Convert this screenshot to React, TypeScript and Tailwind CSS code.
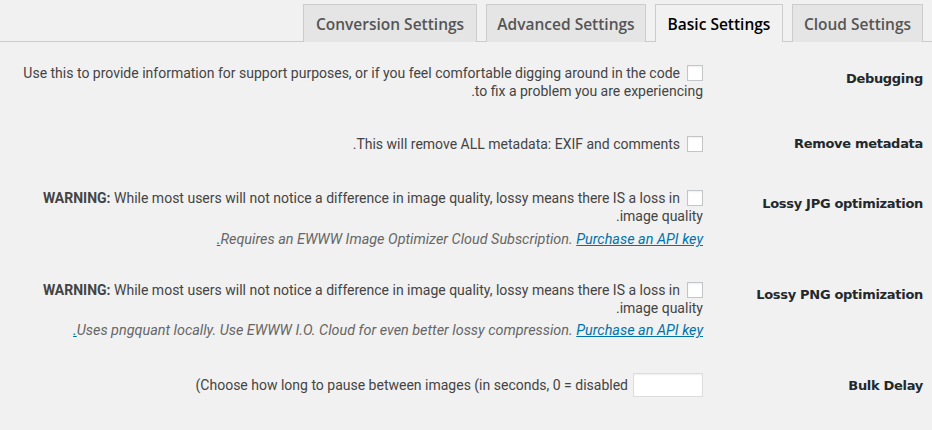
import type { ReactNode } from 'react'

const TABS = [
  { label: 'Cloud Settings', width: 'w-[131px]', active: false },
  { label: 'Basic Settings', width: 'w-[128px]', active: true },
  { label: 'Advanced Settings', width: 'w-[160px]', active: false },
  { label: 'Conversion Settings', width: 'w-[174px]', active: false },
]

const bodyFont = { fontFamily: 'Roboto, "Liberation Sans", sans-serif' }
const labelFont = { fontFamily: '"DejaVu Sans", "Liberation Sans", sans-serif' }

function Checkbox() {
  return (
    <input
      type="checkbox"
      className="appearance-none w-4 h-4 ml-[7px] align-text-bottom bg-white border border-[#c3c6c9] shadow-[inset_0_1px_2px_rgba(0,0,0,0.07)]"
    />
  )
}

function Row({
  label,
  labelPad,
  contentPad,
  children,
}: {
  label: string
  labelPad: string
  contentPad: string
  children: ReactNode
}) {
  return (
    <div className="flex items-start">
      <div
        className={`w-[210px] shrink-0 text-right text-[13px] leading-[18px] font-bold tracking-[-0.3px] text-[#23282d] ${labelPad}`}
        style={labelFont}
      >
        {label}
      </div>
      <div className={`flex-1 pr-[10px] pl-1 text-[14px] leading-[18px] text-[#444] ${contentPad}`}>
        {children}
      </div>
    </div>
  )
}

function Note({ children, className }: { children: ReactNode; className: string }) {
  return <p className={`italic text-[14.4px] text-[#666] ${className}`}>{children}</p>
}

function ApiLink() {
  return (
    <a href="#" className="text-[#0073aa] underline">
      Purchase an API key.
    </a>
  )
}

export default function App() {
  return (
    <div dir="rtl" className="w-full h-[430px] bg-[#f1f1f1] overflow-hidden" style={bodyFont}>
      <div className="flex h-[42px] pt-[4px] pr-[9px] gap-[9px] border-b border-[#ccc]">
        {TABS.map(tab => (
          <div
            key={tab.label}
            className={`${tab.width} h-[38px] -mb-px flex items-center justify-center pt-[2px] border border-b-0 border-[#ccc] text-[15.5px] font-semibold ${
              tab.active ? 'bg-[#f1f1f1] text-black' : 'bg-[#e5e5e5] text-[#555] h-[37px]'
            }`}
            style={{ fontFamily: '"Open Sans", "Noto Sans", sans-serif' }}
          >
            {tab.label}
          </div>
        ))}
      </div>

      <div className="pt-[7px] pr-[9px]">
        <Row label="Debugging" labelPad="pt-[21px]" contentPad="pt-[15px] pb-[15px]">
          <Checkbox />
          Use this to provide information for support purposes, or if you feel comfortable digging around in the code
          <br />
          to fix a problem you are experiencing.
        </Row>

        <Row label="Remove metadata" labelPad="pt-[20px] pb-[22px]" contentPad="pt-[20px]">
          <Checkbox />
          This will remove ALL metadata: EXIF and comments.
        </Row>

        <Row label="Lossy JPG optimization" labelPad="pt-[20px]" contentPad="pt-[14px] pb-[17px]">
          <Checkbox />
          <strong>WARNING:</strong> While most users will not notice a difference in image quality, lossy means there IS a loss in
          <br />
          image quality.
          <Note className="mt-[6px]">
            Requires an EWWW Image Optimizer Cloud Subscription. <ApiLink />
          </Note>
        </Row>

        <Row label="Lossy PNG optimization" labelPad="pt-[20px]" contentPad="pt-[15px] pb-[15px]">
          <Checkbox />
          <strong>WARNING:</strong> While most users will not notice a difference in image quality, lossy means there IS a loss in
          <br />
          image quality.
          <Note className="mt-[5px]">
            Uses pngquant locally. Use EWWW I.O. Cloud for even better lossy compression. <ApiLink />
          </Note>
        </Row>

        <Row label="Bulk Delay" labelPad="pt-[22px]" contentPad="pt-[18px]">
          <div className="flex items-center gap-[5px]">
            <input
              type="text"
              className="w-[70px] h-[24px] bg-white border border-[#ddd] shadow-[inset_0_1px_2px_rgba(0,0,0,0.07)] outline-none"
            />
            <span dir="ltr">(Choose how long to pause between images (in seconds, 0 = disabled</span>
          </div>
        </Row>
      </div>
    </div>
  )
}
